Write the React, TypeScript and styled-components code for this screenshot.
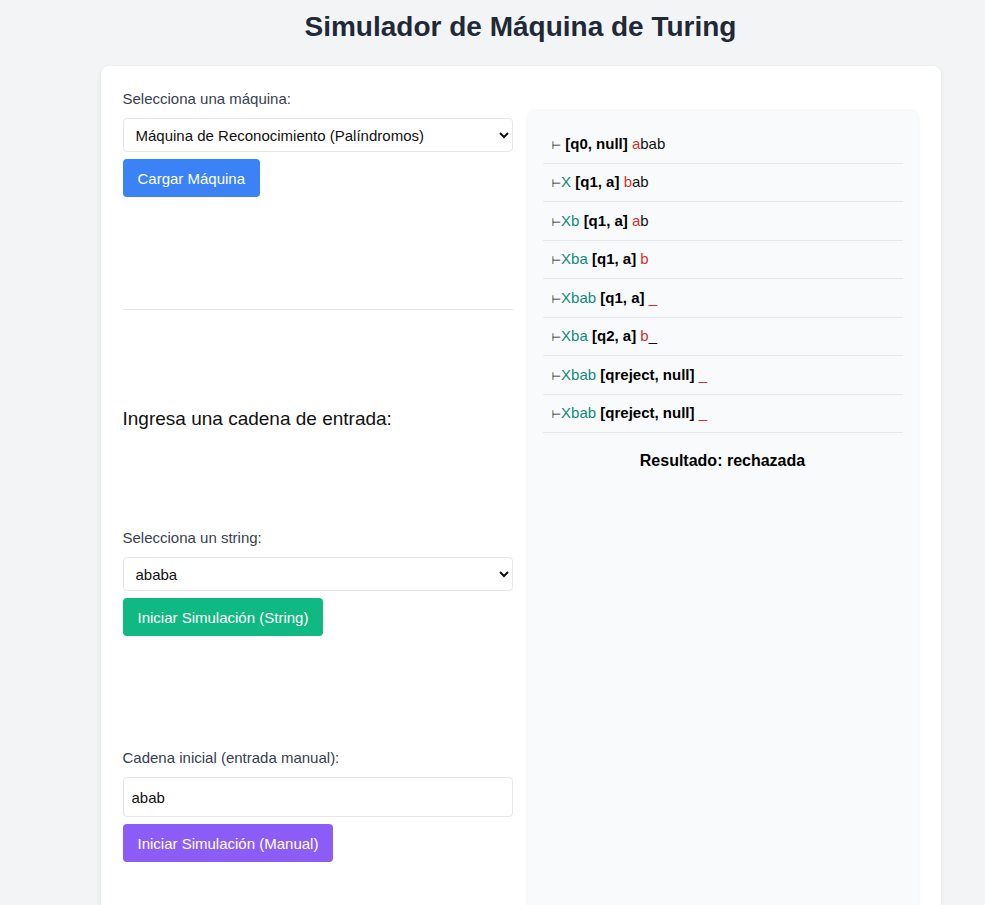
import React from "react";
import styled, { createGlobalStyle } from "styled-components";

const Global = createGlobalStyle`
  html, body { margin: 0; padding: 0; }
  body {
    background: #f3f4f6;
    font-family: "Liberation Sans", Arial, sans-serif;
    color: #111827;
  }
`;

const Page = styled.div`
  display: flex;
  flex-direction: column;
  align-items: center;
  box-sizing: border-box;
  width: 985px;
  padding-left: 56px;
  height: 905px;
  overflow: hidden;
`;

const Title = styled.h1`
  margin: 10px 0 22px;
  font-size: 28px;
  font-weight: 700;
  color: #1f2937;
  line-height: 34px;
  white-space: nowrap;
`;

const Card = styled.div`
  width: 840px;
  flex-shrink: 0;
  box-sizing: border-box;
  background: #ffffff;
  border-radius: 8px;
  box-shadow: 0 1px 4px rgba(0, 0, 0, 0.08);
  padding: 23px 23px 40px 22px;
  display: grid;
  grid-template-columns: 390px 390px;
  column-gap: 15px;
  min-height: 900px;
`;

const Column = styled.div`
  display: flex;
  flex-direction: column;
`;

const Label = styled.label<{ $top?: number }>`
  display: block;
  font-size: 15px;
  color: #374151;
  line-height: 20px;
  margin: ${(p) => p.$top ?? 0}px 0 9px;
`;

const Select = styled.select`
  width: 100%;
  height: 34px;
  box-sizing: border-box;
  border: 1px solid #e5e7eb;
  border-radius: 4px;
  background: #fff;
  font-family: "Liberation Sans", Arial, sans-serif;
  font-size: 15px;
  color: #111;
  padding: 0 8px;
`;

const Input = styled.input`
  width: 100%;
  height: 40px;
  box-sizing: border-box;
  border: 1px solid #e5e7eb;
  border-radius: 4px;
  background: #fff;
  font-family: "Liberation Sans", Arial, sans-serif;
  font-size: 15px;
  color: #111;
  padding: 0 8px;
  outline: none;
`;

const Button = styled.button<{ $bg: string }>`
  align-self: flex-start;
  margin-top: 7px;
  height: 38px;
  padding: 0 15px;
  border: none;
  border-radius: 4px;
  background: ${(p) => p.$bg};
  color: #fff;
  font-family: "Liberation Sans", Arial, sans-serif;
  font-size: 15px;
  cursor: pointer;
`;

const Divider = styled.hr`
  width: 100%;
  border: none;
  border-top: 1px solid #e5e7eb;
  margin: 112px 0 0;
`;

const Heading = styled.h2`
  margin: 97px 0 0;
  font-size: 19px;
  font-weight: 400;
  color: #111;
  line-height: 24px;
`;

const Panel = styled.div`
  margin-top: 22px;
  background: #f9fafb;
  border-radius: 6px;
  box-shadow: 0 0 4px rgba(0, 0, 0, 0.08);
  padding: 15px 15px;
  min-height: 820px;
  box-sizing: border-box;
`;

const Steps = styled.ul`
  list-style: none;
  margin: 0;
  padding: 0;
`;

const Step = styled.li`
  padding: 9px 9px 0;
  height: 38px;
  box-sizing: border-box;
  line-height: 17px;
  font-size: 15px;
  color: #111;
  border-bottom: 1px solid #e5e7eb;
  white-space: nowrap;

  &:nth-child(odd):not(:first-child) {
    height: 39px;
    padding-top: 10px;
  }
`;

const Turnstile = styled.span`
  color: #111;
  font-family: "DejaVu Sans", sans-serif;
  font-size: 11px;
  line-height: 0;
`;

const Left = styled.span`
  color: #0f8a7e;
`;

const State = styled.b`
  font-weight: 700;
  color: #000;
`;

const Head = styled.span`
  color: #d32f2f;
`;

const Result = styled.div`
  text-align: center;
  font-weight: 700;
  font-size: 16px;
  color: #000;
  margin-top: 19px;
`;

type Row = { left: string; state: string; head: string; right: string };

const rows: Row[] = [
  { left: " ", state: "[q0, null]", head: "a", right: "bab" },
  { left: "X", state: "[q1, a]", head: "b", right: "ab" },
  { left: "Xb", state: "[q1, a]", head: "a", right: "b" },
  { left: "Xba", state: "[q1, a]", head: "b", right: "" },
  { left: "Xbab", state: "[q1, a]", head: "_", right: "" },
  { left: "Xba", state: "[q2, a]", head: "b", right: "_" },
  { left: "Xbab", state: "[qreject, null]", head: "_", right: "" },
  { left: "Xbab", state: "[qreject, null]", head: "_", right: "" },
];

export default function App() {
  return (
    <Page>
      <Global />
      <Title>Simulador de Máquina de Turing</Title>
      <Card>
        <Column>
          <Label $top={0}>Selecciona una máquina:</Label>
          <Select defaultValue="pal">
            <option value="pal">Máquina de Reconocimiento (Palíndromos)</option>
          </Select>
          <Button $bg="#3b82f6">Cargar Máquina</Button>
          <Divider />
          <Heading>Ingresa una cadena de entrada:</Heading>
          <Label $top={97}>Selecciona un string:</Label>
          <Select defaultValue="ababa">
            <option value="ababa">ababa</option>
          </Select>
          <Button $bg="#10b981">Iniciar Simulación (String)</Button>
          <Label $top={112}>Cadena inicial (entrada manual):</Label>
          <Input defaultValue="abab" />
          <Button $bg="#8b5cf6">Iniciar Simulación (Manual)</Button>
        </Column>
        <Panel>
          <Steps>
            {rows.map((r, i) => (
              <Step key={i}>
                <Turnstile>⊢</Turnstile>
                <Left>{r.left}</Left> <State>{r.state}</State>{" "}
                <Head>{r.head}</Head>
                {r.right}
              </Step>
            ))}
          </Steps>
          <Result>Resultado: rechazada</Result>
        </Panel>
      </Card>
    </Page>
  );
}
